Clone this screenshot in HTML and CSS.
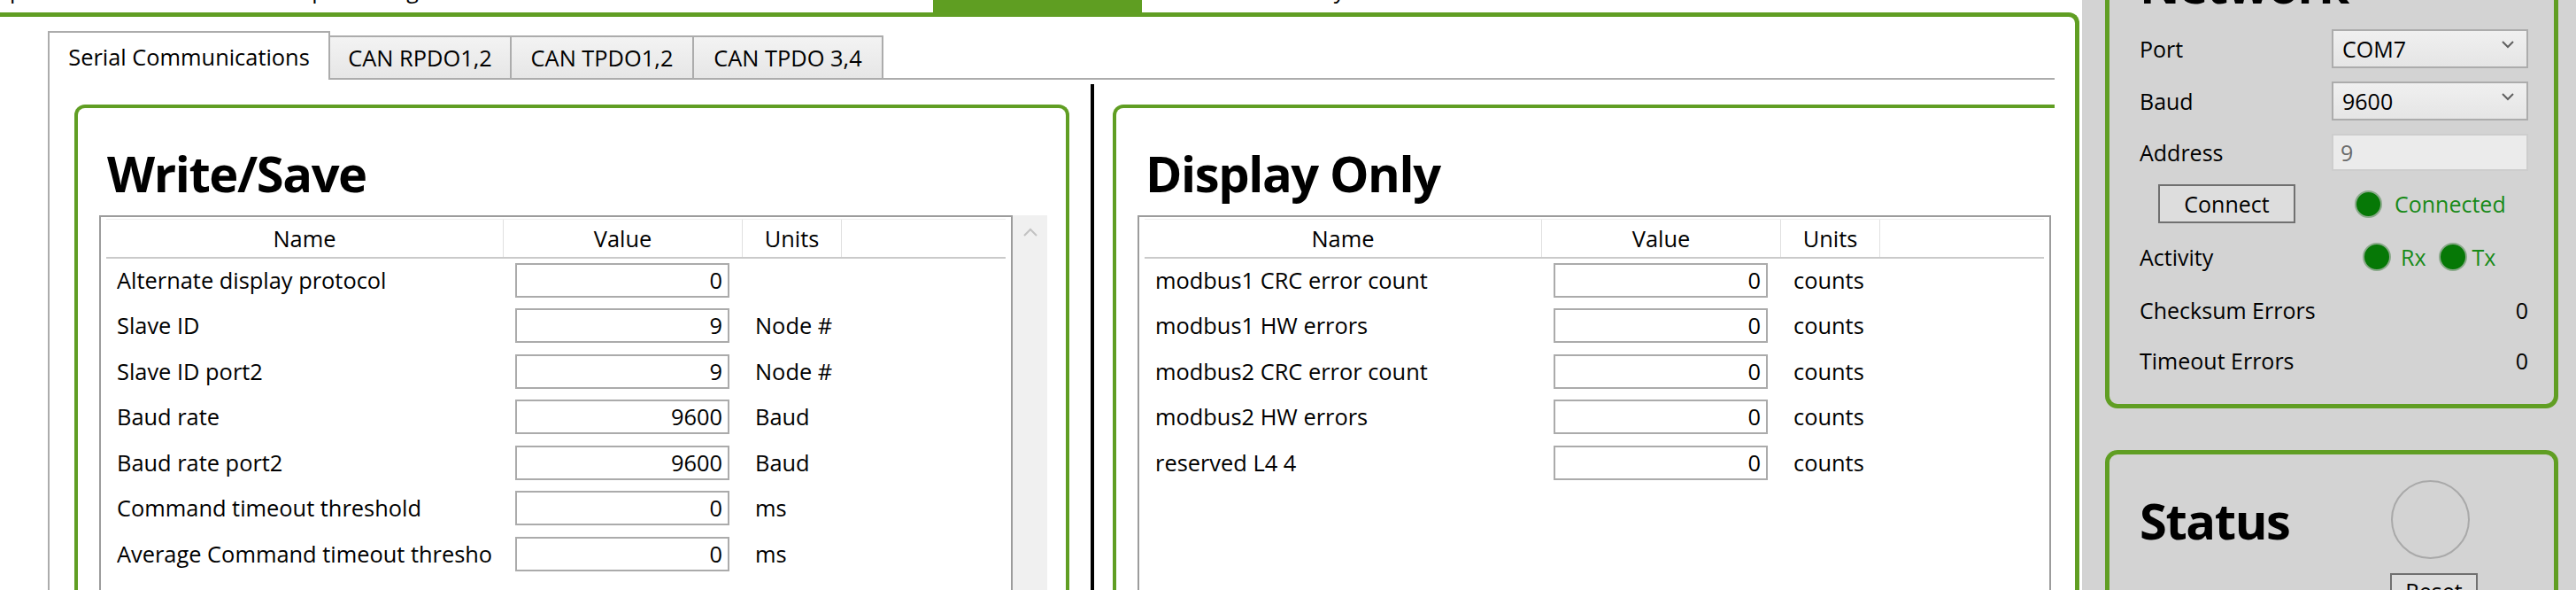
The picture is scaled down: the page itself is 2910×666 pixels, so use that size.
FILE: index.html
```html
<!DOCTYPE html>
<html lang="en">
<head>
<meta charset="utf-8">
<title>Serial Communications</title>
<link rel="stylesheet" href="styles.css">
</head>
<body>
<div class="app">
  <div class="main">
    <nav class="topnav">
      <div class="topnav-inner">
        <div class="navitem n1">Setup</div>
        <div class="navitem n2">Input Config</div>
        <div class="navitem n3 active">Monitor</div>
        <div class="navitem n4">Alarm History</div>
      </div>
    </nav>
    <div class="frame">
      <div class="tabs">
        <div class="tabstrip">
          <div class="tab sel t1">Serial Communications</div>
          <div class="tab t2">CAN RPDO1,2</div>
          <div class="tab t3">CAN TPDO1,2</div>
          <div class="tab t4">CAN TPDO 3,4</div>
        </div>
        <div class="tabbody">
          <div class="pane pane-left">
            <section class="group">
              <h2 class="group-title">Write/Save</h2>
              <div class="grid-wrap">
                <div class="grid">
                  <div class="grid-head">
                    <div class="hc c-name">Name</div>
                    <div class="hc c-val">Value</div>
                    <div class="hc c-unit">Units</div>
                    <div class="hc c-fill"></div>
                  </div>
                  <div class="grid-row"><div class="r-name"><div class="txt">Alternate display protocol</div></div><div class="r-val"><div class="input">0</div></div><div class="r-unit"></div></div>
                  <div class="grid-row"><div class="r-name"><div class="txt">Slave ID</div></div><div class="r-val"><div class="input">9</div></div><div class="r-unit">Node #</div></div>
                  <div class="grid-row"><div class="r-name"><div class="txt">Slave ID port2</div></div><div class="r-val"><div class="input">9</div></div><div class="r-unit">Node #</div></div>
                  <div class="grid-row"><div class="r-name"><div class="txt">Baud rate</div></div><div class="r-val"><div class="input">9600</div></div><div class="r-unit">Baud</div></div>
                  <div class="grid-row"><div class="r-name"><div class="txt">Baud rate port2</div></div><div class="r-val"><div class="input">9600</div></div><div class="r-unit">Baud</div></div>
                  <div class="grid-row"><div class="r-name"><div class="txt">Command timeout threshold</div></div><div class="r-val"><div class="input">0</div></div><div class="r-unit">ms</div></div>
                  <div class="grid-row"><div class="r-name"><div class="txt">Average Command timeout threshold</div></div><div class="r-val"><div class="input">0</div></div><div class="r-unit">ms</div></div>
                </div>
                <div class="vscroll">
                  <svg class="scroll-up" width="16" height="10" viewBox="0 0 16 10"><polyline points="1,9 8,2 15,9" fill="none" stroke="#c2c2c2" stroke-width="2"/></svg>
                </div>
              </div>
            </section>
          </div>
          <div class="splitter"></div>
          <div class="pane pane-right">
            <section class="group">
              <h2 class="group-title">Display Only</h2>
              <div class="grid-wrap">
                <div class="grid">
                  <div class="grid-head">
                    <div class="hc c-name">Name</div>
                    <div class="hc c-val">Value</div>
                    <div class="hc c-unit">Units</div>
                    <div class="hc c-fill"></div>
                  </div>
                  <div class="grid-row"><div class="r-name"><div class="txt">modbus1 CRC error count</div></div><div class="r-val"><div class="input">0</div></div><div class="r-unit">counts</div></div>
                  <div class="grid-row"><div class="r-name"><div class="txt">modbus1 HW errors</div></div><div class="r-val"><div class="input">0</div></div><div class="r-unit">counts</div></div>
                  <div class="grid-row"><div class="r-name"><div class="txt">modbus2 CRC error count</div></div><div class="r-val"><div class="input">0</div></div><div class="r-unit">counts</div></div>
                  <div class="grid-row"><div class="r-name"><div class="txt">modbus2 HW errors</div></div><div class="r-val"><div class="input">0</div></div><div class="r-unit">counts</div></div>
                  <div class="grid-row"><div class="r-name"><div class="txt">reserved L4 4</div></div><div class="r-val"><div class="input">0</div></div><div class="r-unit">counts</div></div>
                </div>
              </div>
            </section>
          </div>
        </div>
      </div>
    </div>
  </div>
  <aside class="side">
    <section class="net">
      <h2 class="side-title">Network</h2>
      <div class="nrows">
        <div class="nrow h44"><div class="nlabel">Port</div><div class="combo"><span>COM7</span><svg width="14" height="9" viewBox="0 0 14 9"><polyline points="1,1 7,7 13,1" fill="none" stroke="#606060" stroke-width="2"/></svg></div></div>
        <div class="nrow h44"><div class="nlabel">Baud</div><div class="combo"><span>9600</span><svg width="14" height="9" viewBox="0 0 14 9"><polyline points="1,1 7,7 13,1" fill="none" stroke="#606060" stroke-width="2"/></svg></div></div>
        <div class="nrow h42"><div class="nlabel">Address</div><div class="addr">9</div></div>
        <div class="nrow h44 connect-row"><div class="btn connect">Connect</div><div class="led led-conn"></div><div class="ok">Connected</div></div>
        <div class="nrow h46"><div class="nlabel act">Activity</div><div class="led"></div><div class="ok rx">Rx</div><div class="led led-tx"></div><div class="ok tx">Tx</div></div>
        <div class="nrow h44"><div class="nlabel grow">Checksum Errors</div><div class="num">0</div></div>
        <div class="nrow h40"><div class="nlabel grow">Timeout Errors</div><div class="num">0</div></div>
      </div>
    </section>
    <section class="status">
      <h2 class="side-title status-title">Status</h2>
      <div class="circle"></div>
      <div></div>
      <div class="btn reset">Reset</div>
    </section>
  </aside>
</div>
</body>
</html>
```

FILE: styles.css
```css
* { box-sizing: border-box; }

body {
  margin: 0;
  width: 2910px;
  height: 666px;
  overflow: hidden;
  background: #ffffff;
  font-family: "Open Sans", "Noto Sans", sans-serif;
  font-size: 25px;
  color: #000;
}

.app {
  display: flex;
  height: 666px;
}

/* ---------- main area ---------- */
.main {
  width: 2352px;
  flex: none;
  display: flex;
  flex-direction: column;
  font-size: 25.4px;
}

.topnav {
  height: 14px;
  overflow: hidden;
  flex: none;
}

.topnav-inner {
  display: flex;
  height: 33px;
  margin-top: -19px;
  margin-left: -41px;
}

.navitem {
  flex: none;
  height: 33px;
  font-size: 25px;
  line-height: 14px;
  white-space: nowrap;
}
.n1 { width: 371px; }
.n2 { width: 724px; }
.n3 { width: 236px; text-align: center; }
.n4 { padding-left: 70px; }
.navitem.active { background: #5f9e22; color: #fff; }

.frame {
  flex: 1;
  min-height: 0;
  display: flex;
  flex-direction: column;
  margin-right: 3px;
  border-top: 5px solid #609e23;
  border-right: 5px solid #609e23;
  border-top-right-radius: 12px;
  padding: 16px 0 0 54px;
}

.tabs {
  width: 2267px;
  flex: 1;
  min-height: 0;
  display: flex;
  flex-direction: column;
}

.tabstrip {
  display: flex;
  align-items: flex-end;
  height: 53px;
  flex: none;
  position: relative;
  z-index: 1;
}

.tab {
  height: 48px;
  display: flex;
  align-items: center;
  justify-content: center;
  white-space: nowrap;
  border: 2px solid #acacac;
  border-left: none;
  border-bottom: none;
  background: linear-gradient(#f3f3f3, #e6e6e6);
}
.tab.sel {
  height: 55px;
  margin-bottom: -2px;
  border-left: 2px solid #acacac;
  background: #ffffff;
}
.t1 { width: 319px; }
.t2 { width: 205px; }
.t3 { width: 206px; }
.t4 { width: 214px; }

.tabbody {
  flex: 1;
  min-height: 0;
  display: flex;
  overflow: hidden;
  border-top: 2px solid #acacac;
  border-left: 2px solid #acacac;
  padding-top: 5px;
}

.pane { flex: none; }
.pane-left { width: 1176px; padding: 23px 24px 0 28px; }
.pane-right { width: 1200px; padding: 23px 0 0 21px; }

.splitter {
  width: 4px;
  flex: none;
  background: #000;
}

.group {
  width: 1124px;
  height: 700px;
  border: 4px solid #609e23;
  border-bottom: none;
  border-radius: 12px 12px 0 0;
  padding: 0 21px 0 24px;
}

.group-title {
  margin: 0 0 20px 9px;
  padding-top: 45px;
  font-size: 56px;
  line-height: 56px;
  font-weight: 700;
  letter-spacing: -1.4px;
}

.grid-wrap { display: flex; }

.grid {
  width: 1032px;
  height: 520px;
  border: 2px solid #9c9c9c;
  padding: 2px 6px 0;
}

.grid-head {
  display: flex;
  height: 45px;
  border-top: 1px solid #ededed;
  border-bottom: 2px solid #cacaca;
}
.hc {
  display: flex;
  align-items: center;
  justify-content: center;
  border-right: 1px solid #e0e0e0;
}
.c-name { width: 449px; }
.c-val { width: 270px; }
.c-unit { width: 112px; }
.c-fill { flex: 1; border-right: none; }

.grid-row {
  display: flex;
  height: 51.5px;
  padding-top: 4.5px;
}
.r-name {
  width: 449px;
  height: 39px;
  line-height: 39px;
  padding: 0 14px 0 12px;
}
.r-name .txt {
  overflow: hidden;
  white-space: nowrap;
}
.r-val {
  width: 270px;
  padding-left: 13px;
}
.input {
  width: 242px;
  height: 39px;
  line-height: 35px;
  border: 2px solid #ababab;
  text-align: right;
  padding-right: 6px;
  background: #fff;
}
.r-unit {
  height: 39px;
  line-height: 39px;
  padding-left: 14px;
  white-space: nowrap;
}

.vscroll {
  width: 39px;
  height: 520px;
  background: #f0f0f0;
  display: flex;
  justify-content: center;
  padding-top: 14px;
}
.scroll-up { display: block; }

/* ---------- sidebar ---------- */
.side {
  flex: none;
  width: 558px;
  background: #d3d3d3;
  padding: 0 20px 0 26px;
  display: flex;
  flex-direction: column;
}

.net {
  margin-top: -85px;
  border: 5px solid #609e23;
  border-radius: 14px;
  padding: 34px 29px 29px 34px;
}

.side-title {
  margin: 0 0 23px;
  font-size: 56px;
  line-height: 56px;
  font-weight: 700;
  letter-spacing: -1.4px;
}

.nrows {
  display: flex;
  flex-direction: column;
  gap: 15px;
}
.nrow {
  display: flex;
  align-items: center;
}
.h40 { height: 40px; }
.h42 { height: 42px; }
.h44 { height: 44px; }
.h46 { height: 46px; }

.nlabel { width: 217px; flex: none; white-space: nowrap; }
.nlabel.act { width: 252px; }
.nlabel.grow { flex: 1; }

.combo {
  width: 222px;
  height: 44px;
  border: 2px solid #acacac;
  background: linear-gradient(#f0f0f0, #e5e5e5);
  display: flex;
  align-items: center;
  justify-content: space-between;
  padding: 0 14px 0 10px;
}
.combo svg { margin-top: -10px; }

.addr {
  width: 222px;
  height: 42px;
  border: 2px solid #cdcdcd;
  background: #ebebeb;
  color: #6b6b6b;
  padding-left: 8px;
  line-height: 38px;
}

.btn {
  height: 44px;
  border: 2px solid #707070;
  background: #dddddd;
  display: flex;
  align-items: center;
  justify-content: center;
}
.connect { width: 155px; margin-left: 21px; }

.led {
  width: 32px;
  height: 32px;
  flex: none;
  border-radius: 50%;
  background: #067806;
  border: 2px solid #8aa98a;
}
.led-conn { margin-left: 67px; width: 31px; height: 31px; }
.led-tx { margin-left: 14px; }

.ok { color: #188a18; }
.connect-row .ok { margin-left: 14px; }
.rx { margin-left: 11px; }
.tx { margin-left: 6px; }

.num { text-align: right; }

.status {
  margin-top: 47px;
  height: 260px;
  border: 5px solid #609e23;
  border-radius: 14px;
  padding: 29px 29px 0 34px;
  display: grid;
  grid-template-columns: 283px auto;
  grid-template-rows: auto auto;
  row-gap: 16px;
  align-items: center;
  align-content: start;
}
.status-title { margin: 0; }
.circle {
  width: 89px;
  height: 89px;
  margin-left: 1px;
  border: 2px solid #a9a9a9;
  border-radius: 50%;
}
.reset {
  width: 99px;
  height: 40px;
}
```
